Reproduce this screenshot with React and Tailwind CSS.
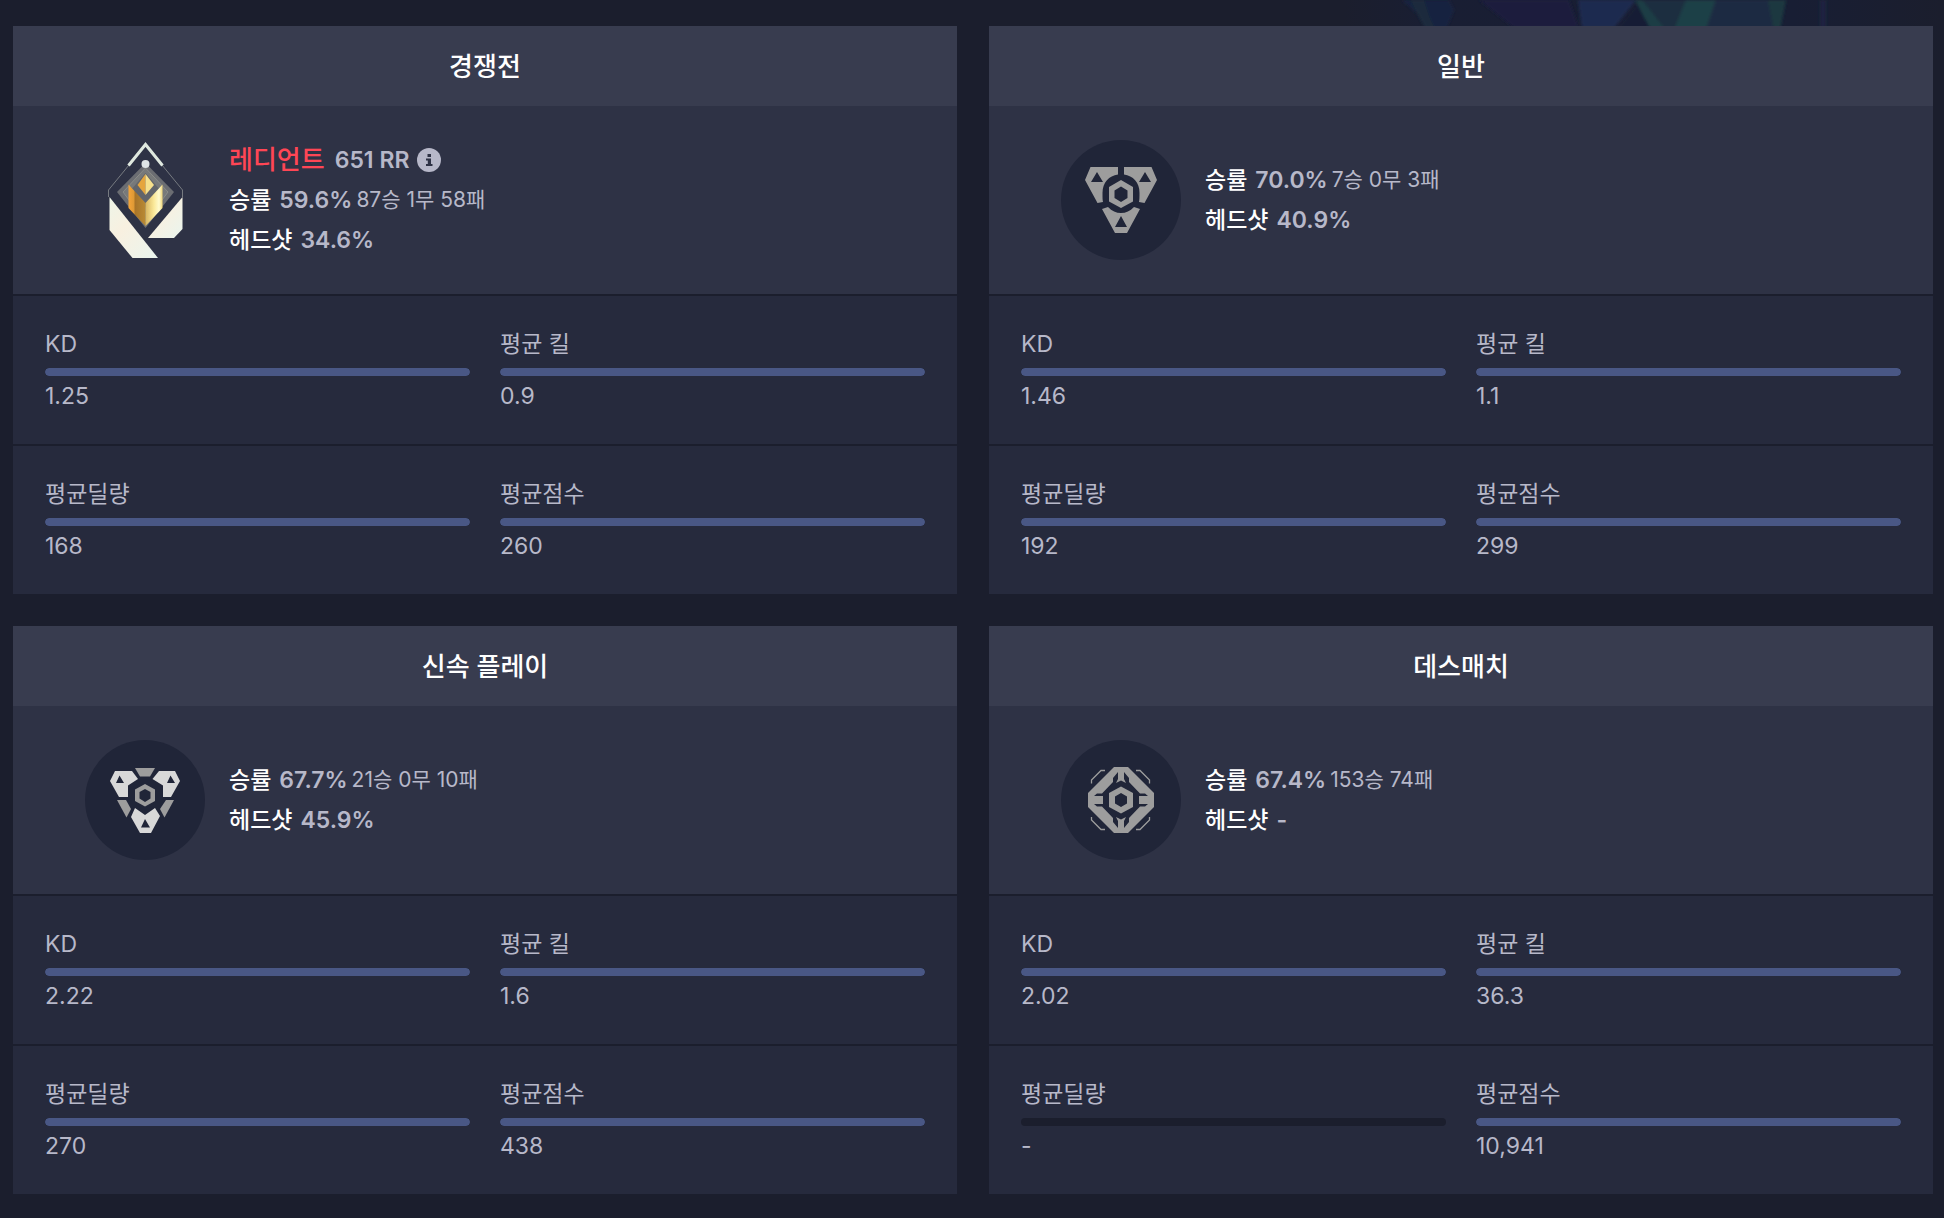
const modes = [
  {
    name: '경쟁전',
    icon: 'radiant',
    tier: '레디언트',
    rr: '651 RR',
    winRate: '59.6%',
    record: '87승 1무 58패',
    headshot: '34.6%',
    stats: [
      { label: 'KD', value: '1.25', percent: 100 },
      { label: '평균 킬', value: '0.9', percent: 100 },
      { label: '평균딜량', value: '168', percent: 100 },
      { label: '평균점수', value: '260', percent: 100 },
    ],
  },
  {
    name: '일반',
    icon: 'unrated',
    winRate: '70.0%',
    record: '7승 0무 3패',
    headshot: '40.9%',
    stats: [
      { label: 'KD', value: '1.46', percent: 100 },
      { label: '평균 킬', value: '1.1', percent: 100 },
      { label: '평균딜량', value: '192', percent: 100 },
      { label: '평균점수', value: '299', percent: 100 },
    ],
  },
  {
    name: '신속 플레이',
    icon: 'swift',
    winRate: '67.7%',
    record: '21승 0무 10패',
    headshot: '45.9%',
    stats: [
      { label: 'KD', value: '2.22', percent: 100 },
      { label: '평균 킬', value: '1.6', percent: 100 },
      { label: '평균딜량', value: '270', percent: 100 },
      { label: '평균점수', value: '438', percent: 100 },
    ],
  },
  {
    name: '데스매치',
    icon: 'deathmatch',
    winRate: '67.4%',
    record: '153승 74패',
    headshot: '-',
    stats: [
      { label: 'KD', value: '2.02', percent: 100 },
      { label: '평균 킬', value: '36.3', percent: 100 },
      { label: '평균딜량', value: '-', percent: 0 },
      { label: '평균점수', value: '10,941', percent: 100 },
    ],
  },
]

const RadiantIcon = () => (
  <svg viewBox="0 0 120 120" className="size-[120px] shrink-0" aria-hidden="true">
    <defs>
      <linearGradient id="goldLeft" x1="0" x2="1">
        <stop offset="0" stopColor="#f5a53a" />
        <stop offset="0.3" stopColor="#e09a35" />
        <stop offset="0.4" stopColor="#a87428" />
        <stop offset="1" stopColor="#b98a35" />
      </linearGradient>
      <linearGradient id="goldRight" x1="0" x2="1">
        <stop offset="0" stopColor="#d8b560" />
        <stop offset="0.5" stopColor="#fbe99a" />
        <stop offset="0.8" stopColor="#fffbd0" />
        <stop offset="1" stopColor="#f0d578" />
      </linearGradient>
      <linearGradient id="wing" x1="0" y1="0" x2="1" y2="1">
        <stop offset="0" stopColor="#eef5e8" />
        <stop offset="0.4" stopColor="#f8f0e0" />
        <stop offset="1" stopColor="#eaf5ee" />
      </linearGradient>
    </defs>
    <path d="M44 25 23.500 50v7M77 25l20.500 25v7" fill="none" stroke="#767a80" strokeWidth="1" />
    <path d="M43.500 25.500 60.500 4.500 77.500 25.500" fill="none" stroke="#dfe8df" strokeWidth="3" />
    <path d="M60.500 23 89 52 60.500 88 32 52Z" fill="#6b6d72" />
    <path d="M60.500 28 83 52 60.500 82 38 52Z" fill="#77797a" stroke="#8b8c88" strokeWidth="1" />
    <path d="M60.500 33 75 50 60.500 67 46 50Z" fill="#62656b" />
    <circle cx="60.500" cy="24" r="4" fill="#dfe5e6" />
    <path d="M43.500 44.500 60.500 63v23L43.500 68Z" fill="url(#goldLeft)" />
    <path d="M77.500 44.500 60.500 63v23L77.500 68Z" fill="url(#goldRight)" />
    <path d="M60.500 34v21L52.500 45Z" fill="#e5a53e" />
    <path d="M60.500 34v21L69 45Z" fill="#f6e08c" />
    <path d="M24.500 57 73 118H47.500L24.500 90Z" fill="url(#wing)" />
    <path d="M97.500 57v32L89 98H63Z" fill="url(#wing)" />
  </svg>
)

const UnratedIcon = () => (
  <svg viewBox="0 0 120 120" className="size-[120px] shrink-0" aria-hidden="true">
    <circle cx="60" cy="60" r="60" fill="#202538" />
    <g fill="#9d9d9d" fillRule="evenodd">
      <path d="M29.500 27H57v7.500C48 36 41.500 42 41.500 53c0 4 0 7 .5 9l-5.500 1L24 40ZM36 32l-6 10h12Z" />
      <path d="M90.500 27H63v7.500C72 36 78.500 42 78.500 53c0 4 0 7-.5 9l5.500 1L96 40ZM84 32l6 10H78Z" />
      <path d="M41 69l6-2c4 4 8 6 13 6s9-2 13-6l6 2L66 93H54ZM60 76l-6 11h12Z" />
      <path d="M60 40 72 47v14.500L60 68 48 61.500V47ZM60 46.500 53.500 50.500v7.500l6.500 4 6.500-4v-7.500Z" />
    </g>
  </svg>
)

const SwiftIcon = () => (
  <svg viewBox="0 0 120 120" className="size-[120px] shrink-0" aria-hidden="true">
    <circle cx="60" cy="60" r="60" fill="#202538" />
    <g fill="#d8d8d8" fillRule="evenodd">
      <path d="M30 31H47l6 8-10 6.500V57H34L25 41ZM34.500 35.500 31 43h8Z" />
      <path d="M90 31H74l-6.500 8L78 45.500V57H86L95 41ZM85.500 35.500 82 43h8Z" />
      <path d="M50 68 60 75 70 68 75 76 66 93H55L46 77ZM60 79 56 87.500h9Z" />
    </g>
    <g fill="#9d9d9d" fillRule="evenodd">
      <path d="M50 28H70L65 36.500H55Z" />
      <path d="M32 60h9l5 9-4.500 8.500Z" />
      <path d="M89 60h-8l-6 9 4.500 8.500Z" />
      <path d="M60 44 70 49.500v11.500L60 66.500 50 61V49.500ZM60 49 54.500 52v6.500l5.500 3.500 5.500-3.500V52Z" />
    </g>
  </svg>
)

const DeathmatchIcon = () => (
  <svg viewBox="0 0 120 120" className="size-[120px] shrink-0" aria-hidden="true">
    <circle cx="60" cy="60" r="60" fill="#202538" />
    <g fill="#9d9d9d" fillRule="evenodd">
      <path d="M53 27H67L93 53V67L67 93H53L27 67V53ZM57 32 52 38V42L41 53.500H36L33 56V64L36 66.500H41L52 78V82L57 88H63L68 82V78L79 66.500H84L87 64V56L84 53.500H79L68 42V38L63 32Z" />
      <path d="M57 30H63V39L65 43 60 40.500 55 43 57 39ZM57 90H63V81L65 77 60 79.500 55 77 57 81Z" />
      <path d="M30 56H42V64H30ZM78 56H90V64H78Z" />
      <path d="M60 46.500 72 53v14L60 73.500 48 67V53ZM60 53 54 56.500v7l6 3.500 6-3.500v-7Z" />
    </g>
    <path
      d="M30.500 43.500V40L40 30.500h4M75 30.500h4L88.500 40v3.500M30.500 77v3L40 89.500h4M75 89.500h4L88.500 80v-3"
      fill="none"
      stroke="#9d9d9d"
      strokeWidth="1.300"
    />
  </svg>
)

const icons = {
  radiant: RadiantIcon,
  unrated: UnratedIcon,
  swift: SwiftIcon,
  deathmatch: DeathmatchIcon,
}

// Hero artwork peeking out above the cards
const Backdrop = () => (
  <svg viewBox="0 0 600 60" className="absolute top-0 right-0 -z-10 h-[60px] w-[600px]" aria-hidden="true">
    <defs>
      <filter id="soft">
        <feGaussianBlur stdDeviation="1.500" />
      </filter>
      <linearGradient id="night" x1="0" x2="1">
        <stop offset="0" stopColor="#1b1e2d" />
        <stop offset="0.15" stopColor="#191e33" />
        <stop offset="0.75" stopColor="#181e34" />
        <stop offset="1" stopColor="#1b1e2d" />
      </linearGradient>
    </defs>
    <path d="M0 0H600V60H0Z" fill="url(#night)" />
    <g filter="url(#soft)">
      <path d="M58 0H105L110 10 102 30H92Z" fill="#192341" />
      <path d="M66 0H80L86 18 92 30H82Z" fill="#1a2c3c" />
      <path d="M135 0H225L235 28H170Z" fill="#1a1f3c" />
      <path d="M234 0H292L270 28H238Z" fill="#1e2c50" />
      <path d="M290 8 295 0 325 30H272Z" fill="#181d35" />
      <path d="M292 0H344L333 30H318Z" fill="#1a2f40" />
      <path d="M291 0H298L320 28H306Z" fill="#1b3d45" />
      <path d="M342 0H372L362 30H330Z" fill="#1d3f47" />
      <path d="M372 0H440L432 30H362Z" fill="#1a2b42" />
      <path d="M424 0H442L436 30H430Z" fill="#1a3841" />
      <path d="M476 0H482V30H476Z" fill="#1a2140" />
    </g>
  </svg>
)

const InfoButton = () => (
  <button type="button" aria-label="RR 정보" className="ml-2 size-6 rounded-full">
    <svg viewBox="0 0 24 24" className="size-6">
      <circle cx="12" cy="12" r="12" fill="#b7b8c9" />
      <path d="M10.500 6h3.500v3h-3.500ZM9 10.500h5v5.500h1.500v2H9v-2h1.800v-3.500H9Z" fill="#2e3245" />
    </svg>
  </button>
)

const Stat = ({ stat }) => (
  <div className="flex-1">
    <dt className="text-[23px] leading-8">{stat.label}</dt>
    <dd>
      <div className="mt-2 h-2 overflow-hidden rounded-full bg-[#1b1e2d]">
        <div className="h-full rounded-full bg-[#495785]" style={{ width: `${stat.percent}%` }} />
      </div>
      <p className="mt-1 text-[23px] leading-8">{stat.value}</p>
    </dd>
  </div>
)

const ModeCard = ({ mode }) => {
  const Icon = icons[mode.icon]

  return (
    <section className="bg-[#262a3d]">
      <h2 className="bg-[#383c4f] pt-0.5 text-center text-[26px] leading-[78px] font-medium text-white">{mode.name}</h2>

      {/* Summary */}
      <div className="flex items-center gap-6 bg-[#2e3245] py-[34px] pl-[72px]">
        <Icon />
        <div className="text-[23px] leading-10">
          {mode.tier && (
            <p className="flex items-center">
              <span className="text-[26px] font-medium text-[#ff4655]">{mode.tier}</span>
              <span className="ml-2.5 font-semibold">{mode.rr}</span>
              <InfoButton />
            </p>
          )}
          <p className="flex items-center">
            <span className="font-medium text-white">승률</span>
            <span className="ml-2 font-semibold">{mode.winRate}</span>
            <span className="ml-1 text-[21px]">{mode.record}</span>
          </p>
          <p className="flex items-center">
            <span className="font-medium text-white">헤드샷</span>
            <span className="ml-2 font-semibold">{mode.headshot}</span>
          </p>
        </div>
      </div>

      {/* Stat rows */}
      <dl className="flex gap-[30px] border-t-2 border-[#1b1e2d] px-8 py-8">
        <Stat stat={mode.stats[0]} />
        <Stat stat={mode.stats[1]} />
      </dl>
      <dl className="flex gap-[30px] border-t-2 border-[#1b1e2d] px-8 py-8">
        <Stat stat={mode.stats[2]} />
        <Stat stat={mode.stats[3]} />
      </dl>
    </section>
  )
}

export default function App() {
  return (
    <main className="relative isolate min-h-screen bg-[#1b1e2d] pt-[26px] pr-[11px] pb-6 pl-[13px] font-[Inter,'Noto_Sans_CJK_KR',sans-serif] text-[#b7b8c9]">
      <Backdrop />
      <div className="grid grid-cols-2 gap-8">
        {modes.map((mode) => (
          <ModeCard key={mode.name} mode={mode} />
        ))}
      </div>
    </main>
  )
}
